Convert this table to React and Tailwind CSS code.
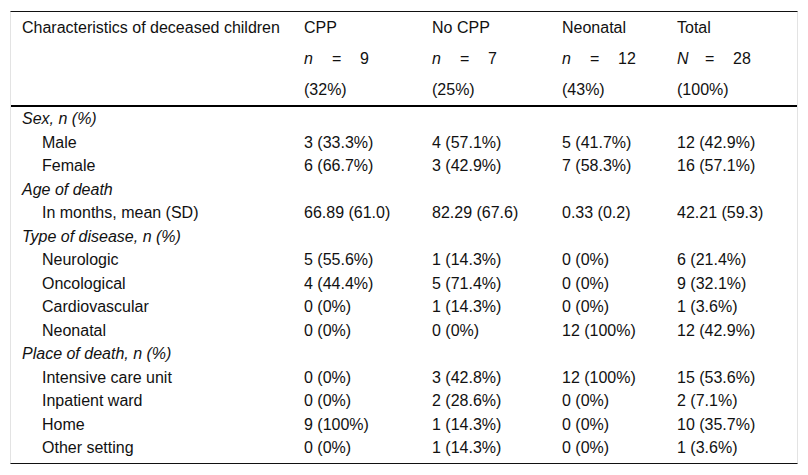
import React from "react";

const cols = "grid grid-cols-[282px_128px_130px_115px_1fr]";

const headers = [
  { title: "CPP", n: "n", num: "9", pct: "(32%)" },
  { title: "No CPP", n: "n", num: "7", pct: "(25%)" },
  { title: "Neonatal", n: "n", num: "12", pct: "(43%)" },
  { title: "Total", n: "N", num: "28", pct: "(100%)" },
];

const sections = [
  {
    title: "Sex, n (%)",
    rows: [
      ["Male", "3 (33.3%)", "4 (57.1%)", "5 (41.7%)", "12 (42.9%)"],
      ["Female", "6 (66.7%)", "3 (42.9%)", "7 (58.3%)", "16 (57.1%)"],
    ],
  },
  {
    title: "Age of death",
    rows: [["In months, mean (SD)", "66.89 (61.0)", "82.29 (67.6)", "0.33 (0.2)", "42.21 (59.3)"]],
  },
  {
    title: "Type of disease, n (%)",
    rows: [
      ["Neurologic", "5 (55.6%)", "1 (14.3%)", "0 (0%)", "6 (21.4%)"],
      ["Oncological", "4 (44.4%)", "5 (71.4%)", "0 (0%)", "9 (32.1%)"],
      ["Cardiovascular", "0 (0%)", "1 (14.3%)", "0 (0%)", "1 (3.6%)"],
      ["Neonatal", "0 (0%)", "0 (0%)", "12 (100%)", "12 (42.9%)"],
    ],
  },
  {
    title: "Place of death, n (%)",
    rows: [
      ["Intensive care unit", "0 (0%)", "3 (42.8%)", "12 (100%)", "15 (53.6%)"],
      ["Inpatient ward", "0 (0%)", "2 (28.6%)", "0 (0%)", "2 (7.1%)"],
      ["Home", "9 (100%)", "1 (14.3%)", "0 (0%)", "10 (35.7%)"],
      ["Other setting", "0 (0%)", "1 (14.3%)", "0 (0%)", "1 (3.6%)"],
    ],
  },
];

export default function App() {
  return (
    <div
      className="bg-white w-[808px] h-[475px] pt-[11px] pl-[10px] text-[#111] text-[16px]"
      style={{ fontFamily: '"Liberation Sans", Arial, sans-serif' }}
    >
      <div className="w-[788px] border-t border-t-[#111] border-b border-b-[#111] border-x border-x-[#e3e3e3] pb-[3.5px]">
        <div className={`${cols} pl-[11px] leading-[31px] border-b-2 border-b-black`}>
          <div>Characteristics of deceased children</div>
          {headers.map((h) => (
            <div key={h.title} className="flex flex-col">
              <div>{h.title}</div>
              <div className="flex">
                <span className="italic w-[28px]">{h.n}</span>
                <span className="w-[28px]">=</span>
                <span>{h.num}</span>
              </div>
              <div>{h.pct}</div>
            </div>
          ))}
        </div>
        <div className="leading-[23.5px]">
          {sections.map((s) => (
            <div key={s.title}>
              <div className={`${cols} pl-[11px]`}>
                <div className="italic">{s.title}</div>
              </div>
              {s.rows.map((r) => (
                <div key={r[0]} className={`${cols} pl-[11px]`}>
                  <div className="pl-[20px]">{r[0]}</div>
                  <div>{r[1]}</div>
                  <div>{r[2]}</div>
                  <div>{r[3]}</div>
                  <div>{r[4]}</div>
                </div>
              ))}
            </div>
          ))}
        </div>
      </div>
    </div>
  );
}
